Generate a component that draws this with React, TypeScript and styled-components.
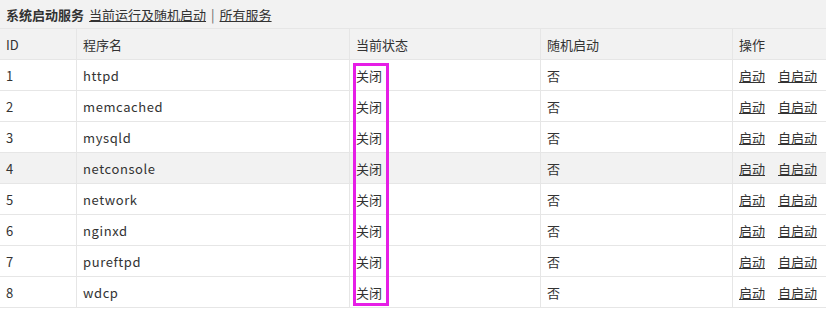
import React from 'react';
import styled, { createGlobalStyle } from 'styled-components';

const GlobalStyle = createGlobalStyle`
  body {
    margin: 0;
    background: #fff;
    font-family: 'Noto Sans CJK SC', 'Noto Sans', sans-serif;
    font-size: 13px;
    color: #333;
  }
`;

const Panel = styled.div`
  position: relative;
  width: 826px;
`;

const TitleBar = styled.div`
  height: 28px;
  display: flex;
  align-items: center;
  gap: 5px;
  padding-left: 6px;
  background: #f2f2f2;
  white-space: nowrap;
`;

const Title = styled.b`
  font-weight: bold;
`;

const Link = styled.a`
  color: #333;
  text-decoration: underline;
  cursor: pointer;
`;

const Sep = styled.span`
  color: #666;
`;

const Table = styled.table`
  width: 826px;
  table-layout: fixed;
  border-collapse: separate;
  border-spacing: 0;
  border-top: 1px solid #e6e6e6;
`;

const Row = styled.tr<{ $hover?: boolean }>`
  background: ${(p) => (p.$hover ? '#f2f2f2' : '#fff')};
`;

const HeadRow = styled.tr`
  background: #f2f2f2;
`;

const Cell = styled.td<{ $last?: boolean; $latin?: boolean }>`
  height: 31px;
  padding: 0 6px;
  border-bottom: 1px solid #e6e6e6;
  border-right: ${(p) => (p.$last ? 'none' : '1px solid #e6e6e6')};
  font-weight: normal;
  text-align: left;
  white-space: nowrap;
  letter-spacing: ${(p) => (p.$latin ? '0.6px' : '0')};
  box-sizing: border-box;
`;

const Actions = styled.div`
  display: flex;
  gap: 13px;
`;

const Highlight = styled.div`
  position: absolute;
  left: 353px;
  top: 63px;
  width: 36px;
  height: 243px;
  border: 3px solid #e61ee6;
  box-sizing: border-box;
  pointer-events: none;
`;

const services = ['httpd', 'memcached', 'mysqld', 'netconsole', 'network', 'nginxd', 'pureftpd', 'wdcp'];

export default function App() {
  return (
    <>
      <GlobalStyle />
      <Panel>
        <TitleBar>
          <Title>系统启动服务</Title>
          <Link>当前运行及随机启动</Link>
          <Sep>|</Sep>
          <Link>所有服务</Link>
        </TitleBar>
        <Table>
          <colgroup>
            <col style={{ width: 77 }} />
            <col style={{ width: 273 }} />
            <col style={{ width: 191 }} />
            <col style={{ width: 192 }} />
            <col style={{ width: 93 }} />
          </colgroup>
          <thead>
            <HeadRow>
              <Cell as="th">ID</Cell>
              <Cell as="th">程序名</Cell>
              <Cell as="th">当前状态</Cell>
              <Cell as="th">随机启动</Cell>
              <Cell as="th" $last>操作</Cell>
            </HeadRow>
          </thead>
          <tbody>
            {services.map((name, i) => (
              <Row key={name} $hover={i === 3}>
                <Cell>{i + 1}</Cell>
                <Cell $latin>{name}</Cell>
                <Cell>关闭</Cell>
                <Cell>否</Cell>
                <Cell $last>
                  <Actions>
                    <Link>启动</Link>
                    <Link>自启动</Link>
                  </Actions>
                </Cell>
              </Row>
            ))}
          </tbody>
        </Table>
        <Highlight />
      </Panel>
    </>
  );
}
